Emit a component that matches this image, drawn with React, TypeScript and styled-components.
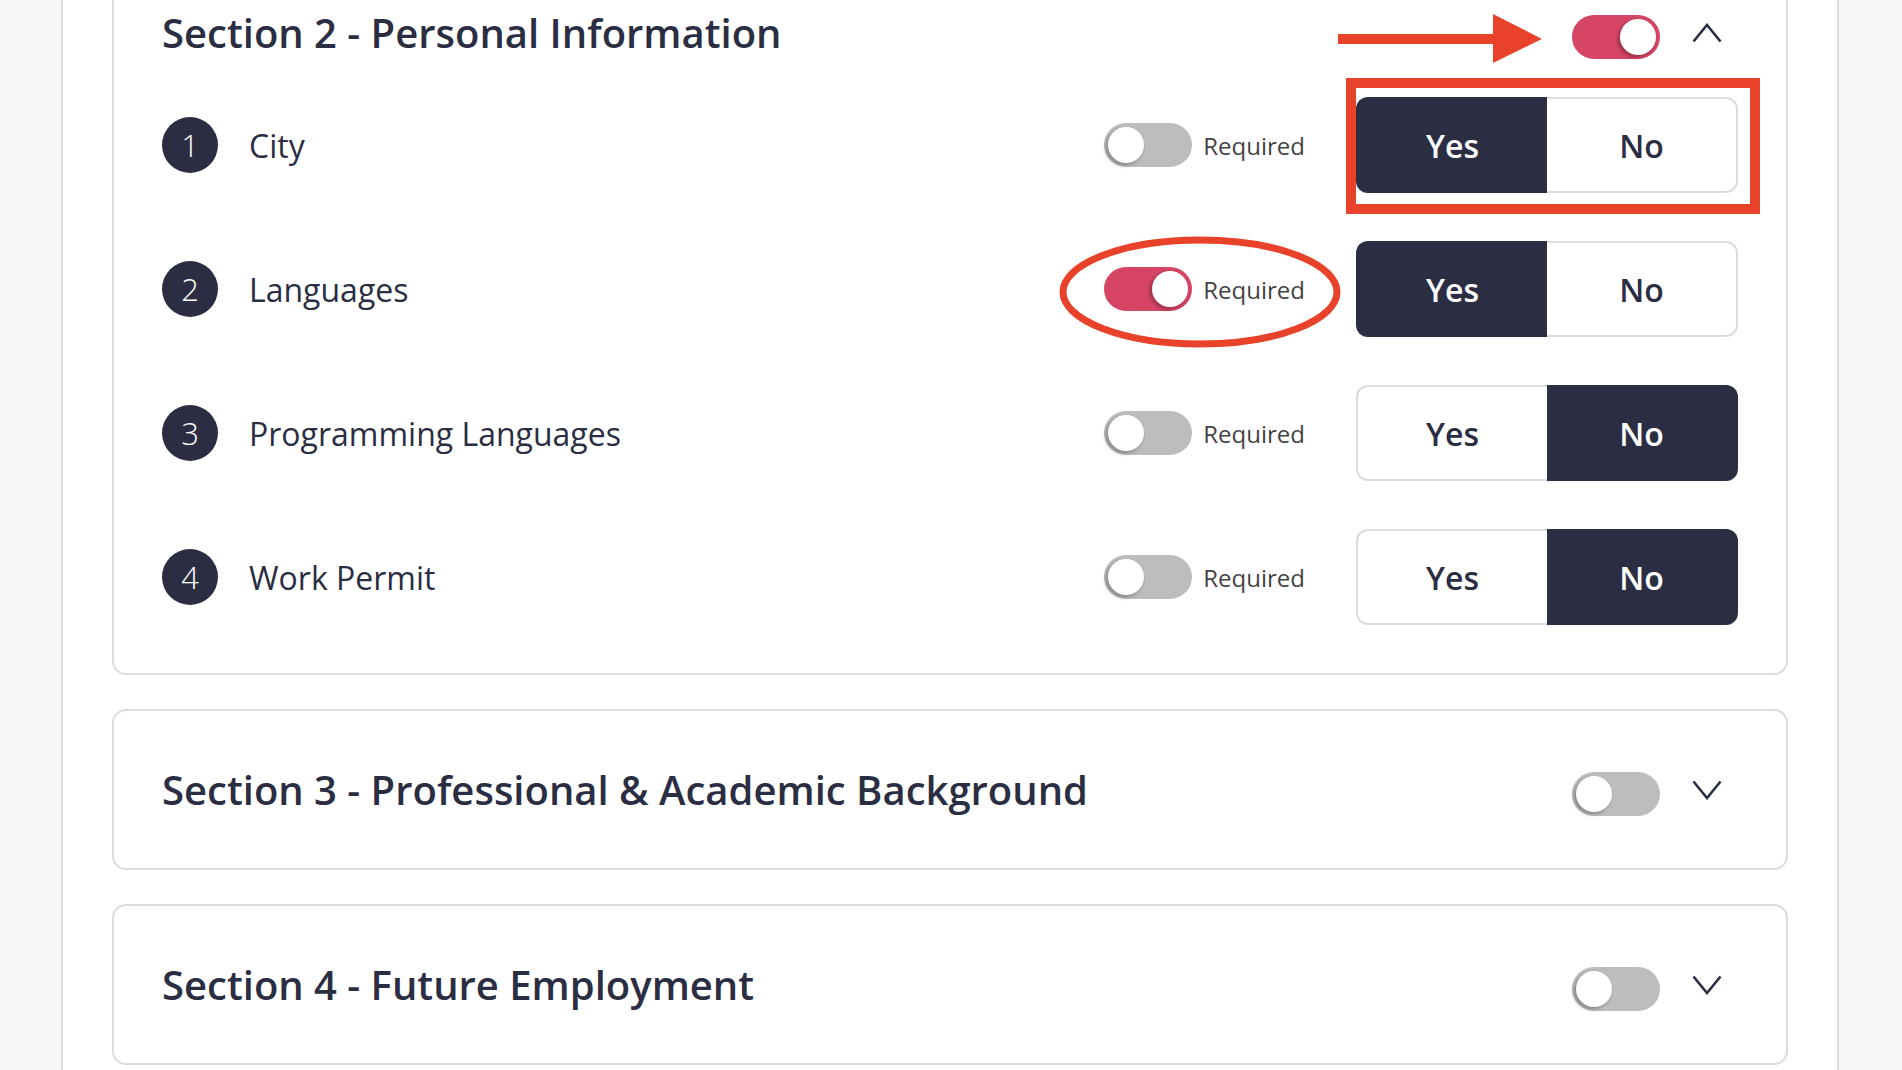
import styled, { createGlobalStyle } from "styled-components";

const NAVY = "#2b2e42";
const ANNOTATION = "#e8432a";

type Question = {
  label: string;
  required: boolean;
  answer: "yes" | "no";
};

const questions: Question[] = [
  { label: "City", required: false, answer: "yes" },
  { label: "Languages", required: true, answer: "yes" },
  { label: "Programming Languages", required: false, answer: "no" },
  { label: "Work Permit", required: false, answer: "no" },
];

const GlobalStyle = createGlobalStyle`
  html, body {
    margin: 0;
    padding: 0;
    background: #f7f7f7;
  }
  body {
    font-family: "Open Sans", "Noto Sans", sans-serif;
    color: ${NAVY};
  }
`;

const Toggle = ({ on, nudge }: { on: boolean; nudge?: boolean }) => (
  <Track $on={on} $nudge={nudge}>
    <Knob />
  </Track>
);

const Chevron = ({ up }: { up: boolean }) => (
  <ChevronIcon width="30" height="20" viewBox="0 0 30 20">
    <polyline
      points={up ? "1.5,18.5 15,2 28.5,18.5" : "1.5,1.5 15,18 28.5,1.5"}
      fill="none"
      stroke={NAVY}
      strokeWidth="2.6"
    />
  </ChevronIcon>
);

const SectionHeader = ({ title, on, open }: { title: string; on: boolean; open: boolean }) => (
  <Header>
    <Title>{title}</Title>
    <HeaderControls>
      <Toggle on={on} nudge />
      <Chevron up={open} />
    </HeaderControls>
  </Header>
);

const App = () => {
  return (
    <Page>
      <GlobalStyle />
      <Panel>
        <Card $first>
          <SectionHeader title="Section 2 - Personal Information" on open />
          <Rows>
            {questions.map((q, i) => (
              <Row key={q.label}>
                <Number>{i + 1}</Number>
                <Label>{q.label}</Label>
                <Toggle on={q.required} />
                <RequiredText>Required</RequiredText>
                <Segmented>
                  <Segment $active={q.answer === "yes"} $side="left">
                    Yes
                  </Segment>
                  <Segment $active={q.answer === "no"} $side="right">
                    No
                  </Segment>
                </Segmented>
              </Row>
            ))}
          </Rows>
        </Card>
        <Card>
          <SectionHeader
            title="Section 3 - Professional & Academic Background"
            on={false}
            open={false}
          />
        </Card>
        <Card>
          <SectionHeader title="Section 4 - Future Employment" on={false} open={false} />
        </Card>
      </Panel>
      <Annotations width="1902" height="1070" viewBox="0 0 1902 1070">
        <rect x="1338" y="34" width="158" height="10" fill={ANNOTATION} />
        <polygon points="1493,14 1542,39 1493,63" fill={ANNOTATION} />
        <rect
          x="1351"
          y="83"
          width="404"
          height="126"
          fill="none"
          stroke={ANNOTATION}
          strokeWidth="10"
        />
        <ellipse
          cx="1200"
          cy="292"
          rx="137"
          ry="52"
          fill="none"
          stroke={ANNOTATION}
          strokeWidth="7"
        />
      </Annotations>
    </Page>
  );
};

const Page = styled.div`
  position: relative;
  width: 1902px;
  height: 1070px;
  overflow: hidden;
  background: #f7f7f7;
`;

const Panel = styled.main`
  box-sizing: border-box;
  width: 1778px;
  height: 100%;
  margin-left: 61px;
  padding: 0 49px;
  background: #fff;
  border-left: 2px solid #dcdcdc;
  border-right: 2px solid #dcdcdc;
  display: flex;
  flex-direction: column;
  gap: 34px;
`;

const Card = styled.section<{ $first?: boolean }>`
  flex-shrink: 0;
  margin-top: ${(p) => (p.$first ? "-48px" : "0")};
  padding: 48px;
  border: 2px solid #dcdcdc;
  border-radius: 14px;
  background: #fff;
`;

const Header = styled.div`
  height: 61px;
  display: flex;
  align-items: center;
  justify-content: space-between;
`;

const Title = styled.h2`
  margin: 0;
  font-size: 40px;
  font-weight: 600;
  color: ${NAVY};
`;

const HeaderControls = styled.div`
  display: flex;
  align-items: center;
  gap: 32px;
  padding-right: 16px;
`;

const ChevronIcon = styled.svg`
  display: block;
`;

const Track = styled.span<{ $on: boolean; $nudge?: boolean }>`
  box-sizing: border-box;
  flex-shrink: 0;
  width: 88px;
  height: 44px;
  padding: 4px;
  margin-top: ${(p) => (p.$nudge ? "9px" : "0")};
  border-radius: 22px;
  background: ${(p) => (p.$on ? "#d64564" : "#bdbdbd")};
  display: flex;
  align-items: center;
  justify-content: ${(p) => (p.$on ? "flex-end" : "flex-start")};
`;

const Knob = styled.span`
  width: 36px;
  height: 36px;
  border-radius: 50%;
  background: #fff;
  box-shadow: -2px 2px 4px rgba(0, 0, 0, 0.32);
`;

const Rows = styled.div`
  margin-top: 34px;
  display: flex;
  flex-direction: column;
  gap: 48px;
`;

const Row = styled.div`
  height: 96px;
  display: flex;
  align-items: center;
`;

const Number = styled.span`
  flex-shrink: 0;
  width: 56px;
  height: 56px;
  border-radius: 50%;
  background: ${NAVY};
  color: #fff;
  font-size: 31px;
  font-weight: 300;
  display: flex;
  align-items: center;
  justify-content: center;
`;

const Label = styled.span`
  flex: 1;
  margin-left: 31px;
  font-size: 32px;
  color: ${NAVY};
`;

const RequiredText = styled.span`
  margin-left: 11px;
  margin-right: 51px;
  font-size: 24px;
  color: #444;
`;

const Segmented = styled.div`
  width: 382px;
  height: 96px;
  display: flex;
`;

const Segment = styled.button<{ $active: boolean; $side: "left" | "right" }>`
  flex: 1;
  margin: 0;
  padding: 0;
  font-family: inherit;
  font-size: 32px;
  font-weight: 600;
  color: ${(p) => (p.$active ? "#fff" : NAVY)};
  background: ${(p) => (p.$active ? NAVY : "#fff")};
  border: 2px solid ${(p) => (p.$active ? NAVY : "#dcdcdc")};
  ${(p) =>
    p.$side === "left"
      ? "border-right: none; border-radius: 12px 0 0 12px;"
      : "border-left: none; border-radius: 0 12px 12px 0;"}
`;

const Annotations = styled.svg`
  position: absolute;
  top: 0;
  left: 0;
  pointer-events: none;
`;

export default App;
